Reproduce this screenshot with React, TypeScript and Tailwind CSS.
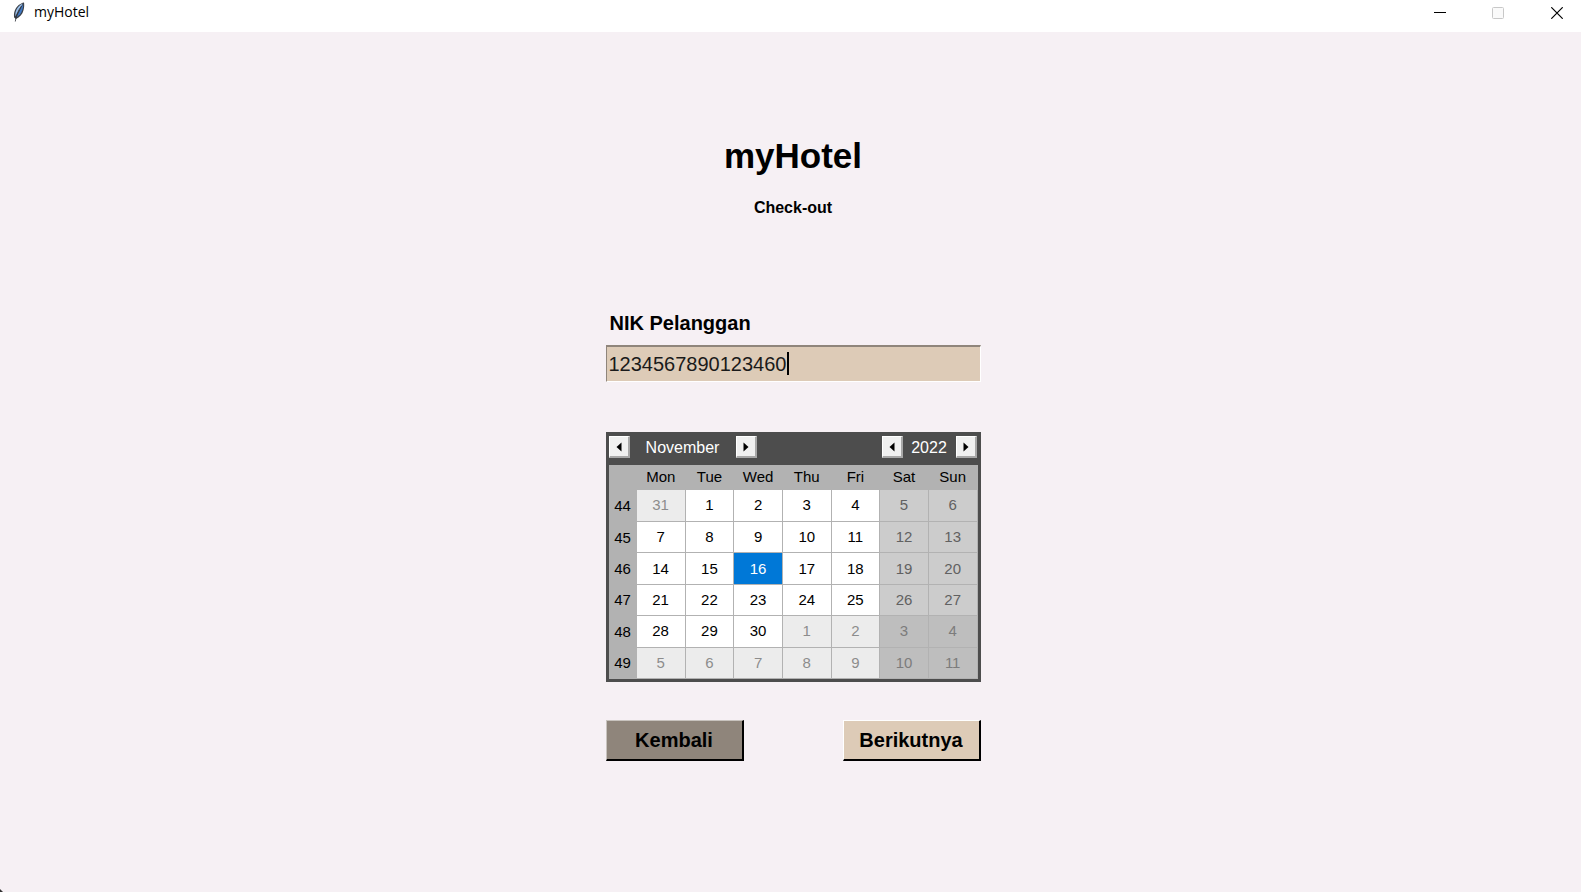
import { useState } from "react";

type Tone = "normal" | "weekend" | "other" | "otherWeekend" | "selected";

const TONES: Record<Tone, string> = {
  normal: "bg-white text-black",
  weekend: "bg-[#cccccc] text-[#616161]",
  other: "bg-[#ececec] text-[#8c8c8c]",
  otherWeekend: "bg-[#bebebe] text-[#7c7c7c]",
  selected: "bg-[#0078d7] text-white",
};

const WEEKDAYS = ["Mon", "Tue", "Wed", "Thu", "Fri", "Sat", "Sun"];

const MONTHS = [
  "January", "February", "March", "April", "May", "June",
  "July", "August", "September", "October", "November", "December",
];

const DAY_MS = 86400000;

function isoWeek(monday: Date): number {
  const thursday = new Date(monday.getTime() + 3 * DAY_MS);
  const start = Date.UTC(thursday.getUTCFullYear(), 0, 1);
  return Math.floor((thursday.getTime() - start) / DAY_MS / 7) + 1;
}

function buildWeeks(year: number, month: number) {
  const first = new Date(Date.UTC(year, month, 1));
  const offset = (first.getUTCDay() + 6) % 7;
  const start = first.getTime() - offset * DAY_MS;
  return Array.from({ length: 6 }, (_, w) => {
    const monday = new Date(start + w * 7 * DAY_MS);
    return {
      week: isoWeek(monday),
      days: Array.from({ length: 7 }, (_, d) => new Date(monday.getTime() + d * DAY_MS)),
    };
  });
}

function FeatherIcon() {
  return (
    <svg width="14" height="20" viewBox="0 0 14 20" aria-hidden="true">
      <path d="M12 .4C8.500 1 4.500 4 2.800 8.500c-.9 2.400-1 4.600-.7 7L4 17c3.600-1.500 6.500-4.500 7.500-8.700.8-3 .9-5.600.5-7.900Z" fill="#3a3f47" />
      <path d="M10.800 1.600C7.500 3 4.800 6 3.700 9.800c-.4 1.500-.5 3-.3 4.500L10.800 1.600Z" fill="#9cc0ea" />
      <path d="M11.200 2C11.300 6 10 10 8 12.500L4.500 15.200 11.200 2Z" fill="#3f78c4" />
      <path d="M9.500 4C6.500 8 4 13 3.300 19.500" fill="none" stroke="#2b2f36" strokeWidth=".8" />
    </svg>
  );
}

function ArrowButton({ dir, label, onClick }: { dir: "left" | "right"; label: string; onClick: () => void }) {
  return (
    <button
      type="button"
      aria-label={label}
      onClick={onClick}
      className="flex h-[22px] w-[21px] items-center justify-center border border-r-2 border-b-2 border-t-white border-l-white border-r-[#a8a8a8] border-b-[#a8a8a8] bg-[#f0f0f0]"
    >
      <svg width="6" height="10" viewBox="0 0 6 10" aria-hidden="true">
        <path d={dir === "left" ? "M5.500 .5v9L.5 5Z" : "M.5 .5v9L5.500 5Z"} fill="#000" />
      </svg>
    </button>
  );
}

function Calendar() {
  const [view, setView] = useState({ year: 2022, month: 10 });
  const [selected, setSelected] = useState(Date.UTC(2022, 10, 16));

  const shift = (months: number) => {
    const total = view.year * 12 + view.month + months;
    setView({ year: Math.floor(total / 12), month: total % 12 });
  };

  const toneOf = (date: Date): Tone => {
    if (date.getTime() === selected) return "selected";
    const weekend = date.getUTCDay() === 0 || date.getUTCDay() === 6;
    if (date.getUTCMonth() !== view.month) return weekend ? "otherWeekend" : "other";
    return weekend ? "weekend" : "normal";
  };

  return (
    <section aria-label="Calendar" className="border-3 border-[#4d4d4d] bg-[#b2b2b2]">
      <div className="flex h-[30px] items-start justify-between bg-[#4d4d4d] pt-px text-base leading-6 text-white">
        <div className="flex">
          <ArrowButton dir="left" label="Previous month" onClick={() => shift(-1)} />
          <span className="w-[106px] text-center">{MONTHS[view.month]}</span>
          <ArrowButton dir="right" label="Next month" onClick={() => shift(1)} />
        </div>
        <div className="flex pr-px">
          <ArrowButton dir="left" label="Previous year" onClick={() => shift(-12)} />
          <span className="w-[53px] text-center">{view.year}</span>
          <ArrowButton dir="right" label="Next year" onClick={() => shift(12)} />
        </div>
      </div>
      <table className="h-[214px] w-full table-fixed border-collapse text-center text-[15px] leading-5">
        <thead>
          <tr className="h-[25px]">
            <th className="w-[28px] p-0" aria-label="Week" />
            {WEEKDAYS.map((day) => (
              <th key={day} scope="col" className="p-0 pb-px font-normal">
                {day}
              </th>
            ))}
          </tr>
        </thead>
        <tbody>
          {buildWeeks(view.year, view.month).map(({ week, days }) => (
            <tr key={week}>
              <th scope="row" className="p-0 pt-px font-normal">
                {week}
              </th>
              {days.map((date) => (
                <td key={date.getTime()} className="h-px border-r border-b border-[#b2b2b2] p-0">
                  <button
                    type="button"
                    onClick={() => setSelected(date.getTime())}
                    className={`block h-full w-full ${TONES[toneOf(date)]}`}
                  >
                    {date.getUTCDate()}
                  </button>
                </td>
              ))}
            </tr>
          ))}
        </tbody>
      </table>
    </section>
  );
}

export default function App() {
  const [nik, setNik] = useState("1234567890123460");

  return (
    <div className="relative flex min-h-screen flex-col bg-[#f6f0f4] font-['Liberation_Sans',Arial,sans-serif] text-black">
      <header className="flex h-8 items-start justify-between bg-white">
        <div className="flex h-6 items-center gap-2 pl-3">
          <FeatherIcon />
          <span className="font-['Open_Sans',sans-serif] text-sm leading-5">myHotel</span>
        </div>
        <div className="flex h-[26px] items-center">
          <button type="button" aria-label="Minimize" className="flex h-full w-[58px] items-center justify-center">
            <svg width="12" height="12" viewBox="0 0 12 12"><path d="M0 5.500h12" stroke="#000" /></svg>
          </button>
          <button type="button" aria-label="Maximize" disabled className="flex h-full w-[58px] items-center justify-center">
            <svg width="12" height="12" viewBox="0 0 12 12"><rect x=".5" y=".5" width="11" height="11" rx="1" fill="#fafafa" stroke="#c8c8c8" /></svg>
          </button>
          <button type="button" aria-label="Close" className="flex h-full w-[54px] items-center justify-center pl-1.5">
            <svg width="12" height="12" viewBox="0 0 12 12"><path d="M.3.3l11.400 11.400M11.700.3.3 11.700" stroke="#000" strokeWidth="1.200" /></svg>
          </button>
        </div>
      </header>

      <main className="flex flex-1 flex-col items-center pt-[104px] pl-[5px]">
        <h1 className="text-[35px] leading-10 font-bold">myHotel</h1>
        <p className="mt-5 text-base leading-6 font-bold">Check-out</p>

        <form className="mt-[88px] flex w-[375px] flex-col" onSubmit={(e) => e.preventDefault()}>
          <label htmlFor="nik" className="pl-1 text-xl leading-[30px] font-bold">
            NIK Pelanggan
          </label>
          <div className="relative mt-[7px]">
            <input
              id="nik"
              value={nik}
              onChange={(e) => setNik(e.target.value)}
              className="block h-[37px] w-full border border-t-2 border-t-[#8f857b] border-r-white border-b-white border-l-[#8f857b] bg-[#ddcbb7] px-[2px] text-xl text-[#1a1a1a] caret-transparent outline-none"
            />
            <span className="pointer-events-none absolute top-[7px] left-[181px] h-[23px] w-[2px] bg-black" />
          </div>

          <div className="mt-[50px]">
            <Calendar />
          </div>

          <div className="mt-[38px] flex justify-between">
            <button
              type="button"
              className="h-[41px] w-[138px] border-t border-r-2 border-b-2 border-l border-t-[#c8c3be] border-r-black border-b-black border-l-[#c8c3be] bg-[#8f857b] text-xl font-bold"
            >
              Kembali
            </button>
            <button
              type="submit"
              className="h-[41px] w-[138px] border-t border-r-2 border-b-2 border-l border-t-white border-r-black border-b-black border-l-white bg-[#ddcbb7] text-xl font-bold"
            >
              Berikutnya
            </button>
          </div>
        </form>
      </main>

      <svg className="absolute bottom-0 left-0" width="3" height="3" viewBox="0 0 3 3" aria-hidden="true">
        <path d="M0 0 3 3H0Z" fill="#333" />
      </svg>
    </div>
  );
}
